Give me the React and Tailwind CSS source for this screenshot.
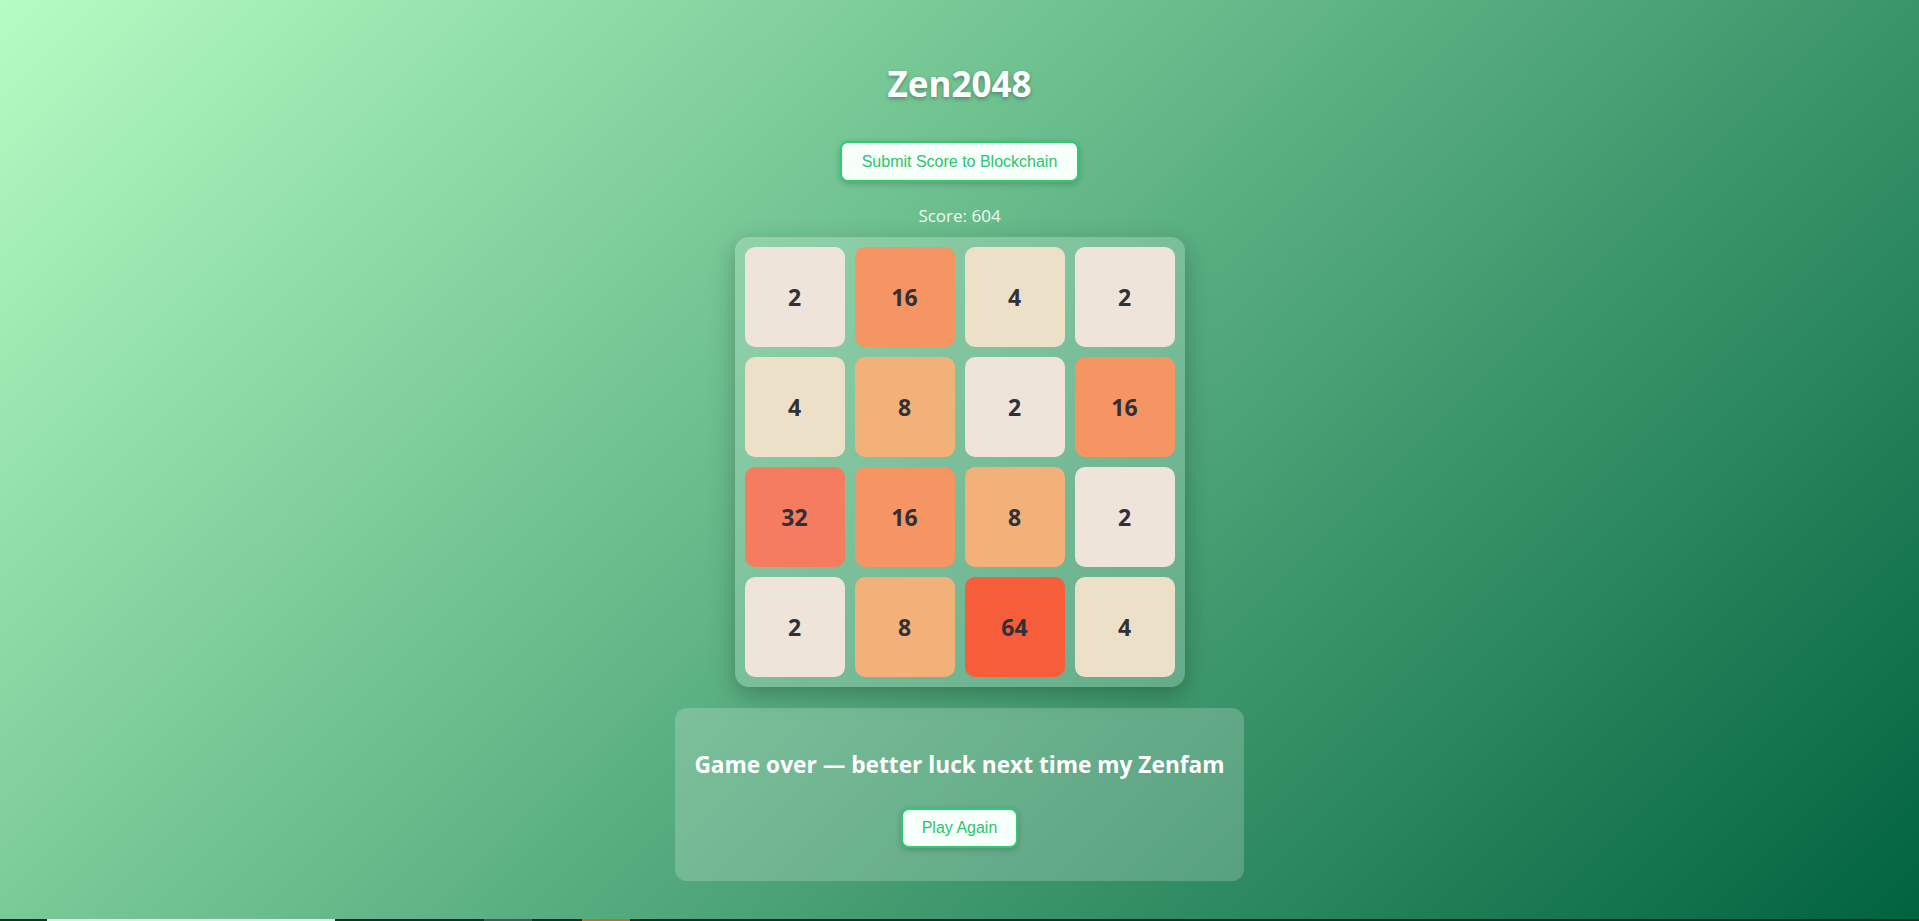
const board = [
  [2, 16, 4, 2],
  [4, 8, 2, 16],
  [32, 16, 8, 2],
  [2, 8, 64, 4],
];

const tileColors = {
  2: 'bg-[#eee4da]',
  4: 'bg-[#ede0c8]',
  8: 'bg-[#f2b179]',
  16: 'bg-[#f59563]',
  32: 'bg-[#f67c5f]',
  64: 'bg-[#f65e3b]',
};

function Tile({ value }) {
  return (
    <div
      className={`h-[100px] w-[100px] rounded-[10px] flex items-center justify-center text-[23px] font-bold text-[#303036] ${tileColors[value]}`}
    >
      {value}
    </div>
  );
}

export default function App() {
  return (
    <div className="w-full font-['Open_Sans',sans-serif]">
      <div className="h-[919px] w-full bg-[linear-gradient(135deg,#b5fcc3,#00633f)] flex flex-col items-center">
        {/* Title */}
        <h1 className="mt-[60px] text-[35px] leading-[48px] font-bold text-white [text-shadow:0_2px_4px_rgba(0,0,0,0.3)]">
          Zen2048
        </h1>

        <button className="mt-[33px] h-[41px] px-5 rounded-lg border-2 border-[#2ecc71] bg-[#f6fff9] text-[16px] text-[#2ec46d] font-['Liberation_Sans',Arial,sans-serif] shadow-[0_2px_6px_rgba(0,0,0,0.2)]">
          Submit Score to Blockchain
        </button>

        <div className="mt-[22px] text-[17px] leading-[23px] text-[#effbee]">Score: 604</div>

        {/* Board */}
        <div className="mt-[10px] w-[450px] p-[10px] grid grid-cols-4 gap-[10px] rounded-[14px] bg-white/20 shadow-[0_8px_24px_rgba(0,0,0,0.25)]">
          {board.flat().map((v, i) => (
            <Tile key={i} value={v} />
          ))}
        </div>

        {/* Game over panel */}
        <div className="mt-[21px] w-[569px] h-[173px] rounded-xl bg-white/20 flex flex-col items-center pt-[41px]">
          <h2 className="text-[22.7px] leading-[31px] font-bold text-white">
            Game over — better luck next time my Zenfam
          </h2>
          <button className="mt-[28px] h-[40px] px-[19px] rounded-lg border-2 border-[#2ecc71] bg-[#f6fff9] text-[16px] text-[#2ec46d] font-['Liberation_Sans',Arial,sans-serif] shadow-[0_2px_6px_rgba(0,0,0,0.2)]">
            Play Again
          </button>
        </div>
      </div>

      {/* bottom strip */}
      <div className="h-[2px] w-full flex bg-[#1f2b24]">
        <div className="w-[47px]" />
        <div className="w-[288px] bg-[#e6e6e6]" />
        <div className="w-[149px]" />
        <div className="w-[48px] bg-[#4a5550]" />
        <div className="w-[50px]" />
        <div className="w-[48px] bg-[#b8702a]" />
      </div>
    </div>
  );
}
